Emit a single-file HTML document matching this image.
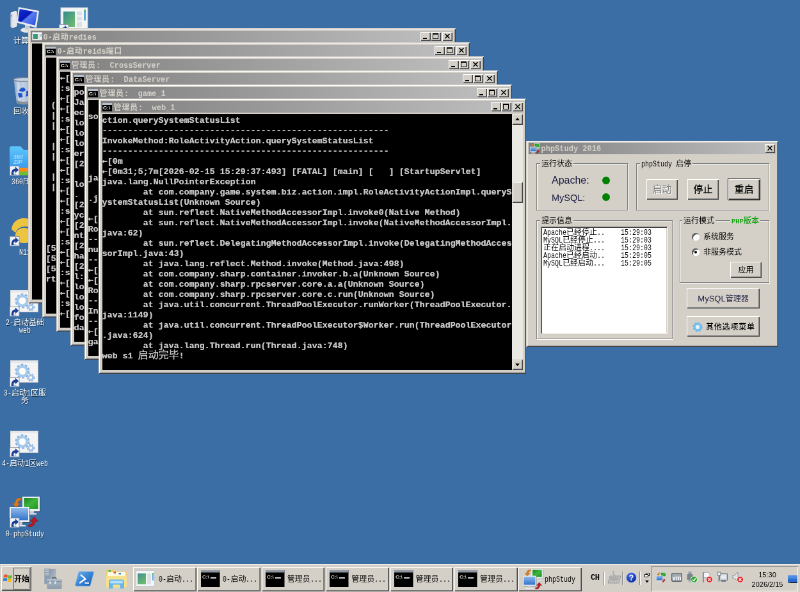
<!DOCTYPE html>
<html lang="zh-CN"><head><meta charset="utf-8"><title>desktop</title>
<style>
html,body{margin:0;padding:0}
body{width:800px;height:592px;overflow:hidden;background:#3a6ea5;position:relative}
#s{will-change:transform;position:absolute;left:0;top:0;width:1250px;height:925px;transform:scale(.64);transform-origin:0 0;overflow:hidden;background:#3a6ea5;font-family:"Liberation Sans","Noto Sans CJK SC",sans-serif;font-size:12px;line-height:1;color:#000}
#s div{position:absolute;box-sizing:border-box}
#s svg{position:absolute;overflow:visible}
#s pre{margin:0;position:absolute}
.l{display:inline-block;font-family:"Liberation Mono",monospace;font-size:12px;transform:scaleX(.8333);transform-origin:0 50%;white-space:pre}
.lb{font-family:"Liberation Mono",monospace;font-size:11.67px;font-weight:bold}
/* desktop icons */
.lab{width:90px;height:13px;text-align:center;color:#fff;font-size:12px;line-height:13px;white-space:nowrap;text-shadow:1px 1px 1px rgba(0,0,0,.6)}
/* console windows */
.cw{width:668px;height:430px;background:#d4d0c8;box-shadow:inset 1px 1px 0 #d4d0c8,inset -1px -1px 0 #404040,inset 2px 2px 0 #fff,inset -2px -2px 0 #808080}
.cap{left:4px;top:4px;width:660px;height:18px;background:linear-gradient(90deg,#808080,#c0c0c0);color:#d4d0c8;white-space:pre}
.tt{position:absolute;left:19.500px;top:5px;font-size:12px;font-weight:bold;font-family:"Liberation Mono","Noto Sans CJK SC",monospace;white-space:pre;line-height:13px}
.tc{letter-spacing:.8px}
.tb{width:16px;height:14px;top:2px;background:#d4d0c8;box-shadow:inset 1px 1px 0 #fff,inset -1px -1px 0 #404040,inset -2px -2px 0 #808080}
.con{left:5.500px;top:24px;width:640px;height:400px;background:#000;overflow:hidden}
.ar{font-family:"DejaVu Sans Mono","Liberation Mono",monospace;line-height:0}
.cj{font-size:16px;font-weight:normal;line-height:0}
.con pre{left:0;top:3px;font-family:"Liberation Mono","DejaVu Sans Mono","Noto Sans CJK SC",monospace;font-weight:bold;font-size:13.33px;line-height:16px;color:#c4c4c4;white-space:pre;text-shadow:.35px 0 0 #c0c0c0}
.sb{left:645.500px;top:24px;width:17px;height:400px;background:#eae8e3}
.sbb{left:0;width:17px;height:17px;background:#d4d0c8;box-shadow:inset 1px 1px 0 #d4d0c8,inset -1px -1px 0 #404040,inset 2px 2px 0 #fff,inset -2px -2px 0 #808080}
/* generic */
.btn{background:#d4d0c8;box-shadow:inset 1px 1px 0 #fff,inset -1px -1px 0 #404040,inset -2px -2px 0 #808080;text-align:center;white-space:nowrap}
.grp{border:1px solid #808080;box-shadow:inset 1px 1px 0 #fff,1px 1px 0 #fff}
.gl{background:#d4d0c8;padding:0 2px;font-size:12px;line-height:12px;white-space:nowrap}
.sunk{box-shadow:inset 1px 1px 0 #808080,inset -1px -1px 0 #fff,inset 2px 2px 0 #404040,inset -2px -2px 0 #d4d0c8}
</style></head>
<body><div id="s">
<svg style="left:15px;top:6px" width="48" height="48" viewBox="0 0 48 48">
<defs><linearGradient id="scr" x1="0" y1="0" x2="1" y2="1"><stop offset="0" stop-color="#1030d8"/><stop offset=".45" stop-color="#0818b8"/><stop offset=".5" stop-color="#5a7cf0"/><stop offset="1" stop-color="#2a50e0"/></linearGradient></defs>
<ellipse cx="27" cy="41" rx="10" ry="4" fill="#e4e7ea"/>
<path d="M24 31 L32 33 L31 41 L24 40Z" fill="#c8ccd2"/>
<path d="M1.500 14 L9 11 L11.500 12 L11.500 35 L4.500 38 L1.500 36Z" fill="#d4d7dc"/><path d="M1.500 14 L9 11 L11.500 12 L4.500 15Z" fill="#f0f2f4"/><path d="M4.500 15 L11.500 12 L11.500 35 L4.500 38Z" fill="#e6e8ec"/>
<rect x="2.300" y="17" width="1.600" height="3" fill="#40c040"/>
<path d="M14 5 L46 11 L42 37.500 L11 29.500Z" fill="#e8ebef"/>
<path d="M15.800 8 L43.200 13.200 L39.800 33.800 L13.200 27Z" fill="url(#scr)"/>
</svg>
<div class="lab" style="left:-6px;top:58px">计算机</div>
<svg style="left:90px;top:6px" width="48" height="48" viewBox="0 0 48 48">
<defs><linearGradient id="gp" x1="0" y1="0" x2="1" y2="1"><stop offset="0" stop-color="#348a8a"/><stop offset="1" stop-color="#72c070"/></linearGradient></defs>
<rect x="5" y="6" width="42" height="34" fill="#f4f5f6" stroke="#c8cdd4"/>
<rect x="9" y="12" width="18" height="24" fill="url(#gp)"/>
<rect x="30" y="12" width="8" height="6" fill="#dcdfe3"/><rect x="30" y="20" width="8" height="6" fill="#dcdfe3"/><rect x="30" y="28" width="8" height="8" fill="#dcdfe3"/>
<rect x="41" y="12" width="3" height="14" fill="#5aa8d8"/><rect x="41" y="9" width="3" height="3" fill="#50b850"/>
</svg>
<svg style="left:92px;top:38px" width="16" height="16" viewBox="0 0 16 16"><rect x=".5" y=".5" width="14.500" height="14.500" fill="#f2f4f8" stroke="#8f98a8"/><path d="M2.800 14 C2.300 8 5 4.300 9 4.500 L9 1.500 L14.200 6.500 L9 11.300 L9 8.400 C6.500 8.300 5.600 10.500 6.800 14Z" fill="#1a3f94"/><path d="M6.800 14 C7.500 12 9.500 11.500 11 14Z" fill="#8fb4e4"/></svg>
<div class="lab" style="left:69px;top:58px"><span class="l" style="width:12px">0-</span>启动<span class="l" style="width:36px">redies</span></div>
<svg style="left:15px;top:116px" width="48" height="48" viewBox="0 0 48 48">
<defs><linearGradient id="rb" x1="0" y1="0" x2="1" y2="0"><stop offset="0" stop-color="#a9bdd6"/><stop offset=".45" stop-color="#dfe8f3"/><stop offset="1" stop-color="#9fb2ca"/></linearGradient></defs>
<g transform="translate(.5,1.800)"><path d="M6 6 L38.500 6 L34 43 Q22 47 10.500 43Z" fill="url(#rb)" opacity=".82"/>
<path d="M10 10 L15 10 L17 40 L13 40Z" fill="#fff" opacity=".35"/>
<ellipse cx="22.200" cy="6.500" rx="16.300" ry="3" fill="#c4d2e4" stroke="#7d8794" stroke-width="1.300"/>
<path d="M14 24 q3 -6 8 -5 l3 4 l-5 3 z M25 25 l6 -2 q3 5 -1 9 l-6 1 q3 -4 1 -8z M13 27 l6 1 l1 6 l-5 1 q-3 -3 -2 -8z" fill="#1f55cc"/>
<path d="M10 39 Q22 43.500 34.400 39 L33.800 43.500 Q22 48 10.500 43.500Z" fill="#8a9098"/></g>
</svg>
<div class="lab" style="left:-6px;top:168px">回收站</div>
<svg style="left:15px;top:226px" width="48" height="48" viewBox="0 0 48 48">
<defs><linearGradient id="zf" x1="0" y1="0" x2="0" y2="1"><stop offset="0" stop-color="#5cc8fa"/><stop offset="1" stop-color="#3a9cf0"/></linearGradient></defs>
<path d="M0 5.500 Q0 2.500 3 2.500 L17 2.500 L22 8 L44 8 Q47 8 47 11 L47 36 L0 36Z" fill="url(#zf)"/>
<rect x="0" y="36" width="47" height="6" fill="#ff8c1a"/><rect x="0" y="42" width="47" height="6" fill="#6cc030"/>
<text x="6" y="22" font-size="9" font-style="italic" font-family="Liberation Sans,sans-serif" fill="#9fd8fc" font-weight="bold">360</text>
<text x="6" y="30.500" font-size="9" font-style="italic" font-family="Liberation Sans,sans-serif" fill="#9fd8fc" font-weight="bold">ZIP</text>
</svg>
<svg style="left:15px;top:259px" width="16" height="16" viewBox="0 0 16 16"><rect x=".5" y=".5" width="14.500" height="14.500" fill="#f2f4f8" stroke="#8f98a8"/><path d="M2.800 14 C2.300 8 5 4.300 9 4.500 L9 1.500 L14.200 6.500 L9 11.300 L9 8.400 C6.500 8.300 5.600 10.500 6.800 14Z" fill="#1a3f94"/><path d="M6.800 14 C7.500 12 9.500 11.500 11 14Z" fill="#8fb4e4"/></svg>
<div class="lab" style="left:-6px;top:278px"><span class="l" style="width:18px">360</span>压缩</div>
<svg style="left:15px;top:336px" width="48" height="48" viewBox="0 0 48 48">
<path d="M3 22.500 C4 11 13 4 24 5 L31 6 L31 18.500 C20 16 12 20 9.500 27.500 Z" fill="#ecc440"/>
<ellipse cx="22.500" cy="32" rx="13.500" ry="12" fill="#ecc440"/>
</svg>
<svg style="left:15px;top:369px" width="16" height="16" viewBox="0 0 16 16"><rect x=".5" y=".5" width="14.500" height="14.500" fill="#f2f4f8" stroke="#8f98a8"/><path d="M2.800 14 C2.300 8 5 4.300 9 4.500 L9 1.500 L14.200 6.500 L9 11.300 L9 8.400 C6.500 8.300 5.600 10.500 6.800 14Z" fill="#1a3f94"/><path d="M6.800 14 C7.500 12 9.500 11.500 11 14Z" fill="#8fb4e4"/></svg>
<div class="lab" style="left:-6px;top:388px"><span class="l" style="width:18px">N11</span></div>
<svg style="left:15px;top:446px" width="48" height="48" viewBox="0 0 48 48">
<rect x="1.500" y="7.500" width="43" height="34" fill="#f4f4f5" stroke="#d9dbde"/><path d="M44.500 8 L44.500 41.500 L2 41.500" fill="none" stroke="#b4b8c0"/>
<rect x="2" y="8" width="42" height="3" fill="#e6e8ea"/>
<circle cx="20" cy="24" r="9" fill="none" stroke="#86b2de" stroke-width="5" stroke-dasharray="3.5 2.2"/>
<circle cx="20" cy="24" r="7.500" fill="none" stroke="#a6c9ea" stroke-width="4"/>
<circle cx="20" cy="24" r="4.500" fill="#fff"/>
<circle cx="33" cy="34" r="4.500" fill="none" stroke="#8fb4dc" stroke-width="3.500" stroke-dasharray="2.2 1.5"/>
<circle cx="33" cy="34" r="3.500" fill="none" stroke="#a4c4e6" stroke-width="2.500"/>
<circle cx="33" cy="34" r="1.800" fill="#f4f4f5"/>
</svg><svg style="left:15px;top:479px" width="16" height="16" viewBox="0 0 16 16"><rect x=".5" y=".5" width="14.500" height="14.500" fill="#f2f4f8" stroke="#8f98a8"/><path d="M2.800 14 C2.300 8 5 4.300 9 4.500 L9 1.500 L14.200 6.500 L9 11.300 L9 8.400 C6.500 8.300 5.600 10.500 6.800 14Z" fill="#1a3f94"/><path d="M6.800 14 C7.500 12 9.500 11.500 11 14Z" fill="#8fb4e4"/></svg>
<div class="lab" style="left:-6px;top:498px"><span class="l" style="width:12px">2-</span>启动基础</div><div class="lab" style="left:-6px;top:510px"><span class="l" style="width:18px">web</span></div>
<svg style="left:15px;top:556px" width="48" height="48" viewBox="0 0 48 48">
<rect x="1.500" y="7.500" width="43" height="34" fill="#f4f4f5" stroke="#d9dbde"/><path d="M44.500 8 L44.500 41.500 L2 41.500" fill="none" stroke="#b4b8c0"/>
<rect x="2" y="8" width="42" height="3" fill="#e6e8ea"/>
<circle cx="20" cy="24" r="9" fill="none" stroke="#86b2de" stroke-width="5" stroke-dasharray="3.5 2.2"/>
<circle cx="20" cy="24" r="7.500" fill="none" stroke="#a6c9ea" stroke-width="4"/>
<circle cx="20" cy="24" r="4.500" fill="#fff"/>
<circle cx="33" cy="34" r="4.500" fill="none" stroke="#8fb4dc" stroke-width="3.500" stroke-dasharray="2.2 1.5"/>
<circle cx="33" cy="34" r="3.500" fill="none" stroke="#a4c4e6" stroke-width="2.500"/>
<circle cx="33" cy="34" r="1.800" fill="#f4f4f5"/>
</svg><svg style="left:15px;top:589px" width="16" height="16" viewBox="0 0 16 16"><rect x=".5" y=".5" width="14.500" height="14.500" fill="#f2f4f8" stroke="#8f98a8"/><path d="M2.800 14 C2.300 8 5 4.300 9 4.500 L9 1.500 L14.200 6.500 L9 11.300 L9 8.400 C6.500 8.300 5.600 10.500 6.800 14Z" fill="#1a3f94"/><path d="M6.800 14 C7.500 12 9.500 11.500 11 14Z" fill="#8fb4e4"/></svg>
<div class="lab" style="left:-6px;top:608px"><span class="l" style="width:12px">3-</span>启动<span class="l" style="width:6px">1</span>区服</div><div class="lab" style="left:-6px;top:620px">务</div>
<svg style="left:15px;top:666px" width="48" height="48" viewBox="0 0 48 48">
<rect x="1.500" y="7.500" width="43" height="34" fill="#f4f4f5" stroke="#d9dbde"/><path d="M44.500 8 L44.500 41.500 L2 41.500" fill="none" stroke="#b4b8c0"/>
<rect x="2" y="8" width="42" height="3" fill="#e6e8ea"/>
<circle cx="20" cy="24" r="9" fill="none" stroke="#86b2de" stroke-width="5" stroke-dasharray="3.5 2.2"/>
<circle cx="20" cy="24" r="7.500" fill="none" stroke="#a6c9ea" stroke-width="4"/>
<circle cx="20" cy="24" r="4.500" fill="#fff"/>
<circle cx="33" cy="34" r="4.500" fill="none" stroke="#8fb4dc" stroke-width="3.500" stroke-dasharray="2.2 1.5"/>
<circle cx="33" cy="34" r="3.500" fill="none" stroke="#a4c4e6" stroke-width="2.500"/>
<circle cx="33" cy="34" r="1.800" fill="#f4f4f5"/>
</svg><svg style="left:15px;top:699px" width="16" height="16" viewBox="0 0 16 16"><rect x=".5" y=".5" width="14.500" height="14.500" fill="#f2f4f8" stroke="#8f98a8"/><path d="M2.800 14 C2.300 8 5 4.300 9 4.500 L9 1.500 L14.200 6.500 L9 11.300 L9 8.400 C6.500 8.300 5.600 10.500 6.800 14Z" fill="#1a3f94"/><path d="M6.800 14 C7.500 12 9.500 11.500 11 14Z" fill="#8fb4e4"/></svg>
<div class="lab" style="left:-6px;top:718px"><span class="l" style="width:12px">4-</span>启动<span class="l" style="width:6px">1</span>区<span class="l" style="width:18px">web</span></div>
<svg style="left:15px;top:776px" width="48" height="48" viewBox="0 0 48 48">
<defs><linearGradient id="gm1" x1="0" y1="0" x2="1" y2="1"><stop offset="0" stop-color="#18801c"/><stop offset=".5" stop-color="#3fb43c"/><stop offset="1" stop-color="#1f9322"/></linearGradient>
<linearGradient id="bm1" x1="0" y1="0" x2="0" y2="1"><stop offset="0" stop-color="#8fb8ea"/><stop offset="1" stop-color="#2f74cc"/></linearGradient></defs>
<rect x="21" y="1" width="27" height="23" fill="#20262c" opacity=".55"/><rect x="20" y="0" width="27" height="23" fill="#eef1f4"/><rect x="22.500" y="2" width="22" height="17" fill="url(#gm1)"/>
<rect x="30" y="23" width="8" height="3" fill="#c4c8ce"/><rect x="26" y="26" width="16" height="2" fill="#dde0e4"/>
<rect x="1" y="17" width="31" height="24" fill="#20262c" opacity=".55"/><rect x="0" y="16" width="31" height="24" fill="#e8eef6"/><rect x="2" y="18" width="27" height="19" fill="url(#bm1)"/>
<rect x="11" y="40" width="9" height="4" fill="#c4c8ce"/><rect x="6" y="44" width="19" height="2.500" fill="#e4e7ea"/>
<path d="M18.300 2.200 C13 1.500 9 3.500 8.500 10.500 L4.500 10.500 L10 16.500 L16.500 10.500 L13 10.500 C13 7.500 14.500 5.500 18.300 5 Z" fill="#dc7a1e" stroke="#a4520e" stroke-width=".6"/>
<path d="M29.500 46.800 C35 47.500 39.500 45.500 40 38.500 L44.500 38.500 L38.500 31.500 L32 38.500 L35.500 38.500 C35.500 41.500 34 43.500 29.500 44 Z" fill="#b41c26" stroke="#7c1018" stroke-width=".6"/>
</svg>
<svg style="left:15px;top:809px" width="16" height="16" viewBox="0 0 16 16"><rect x=".5" y=".5" width="14.500" height="14.500" fill="#f2f4f8" stroke="#8f98a8"/><path d="M2.800 14 C2.300 8 5 4.300 9 4.500 L9 1.500 L14.200 6.500 L9 11.300 L9 8.400 C6.500 8.300 5.600 10.500 6.800 14Z" fill="#1a3f94"/><path d="M6.800 14 C7.500 12 9.500 11.500 11 14Z" fill="#8fb4e4"/></svg>
<div class="lab" style="left:-6px;top:828px"><span class="l" style="width:60px">0-phpStudy</span></div>
<div class="cw" style="left:44px;top:44px"><div class="cap"><svg style="left:2px;top:1px" width="16" height="16" viewBox="0 0 16 16"><rect x=".500" y="1.500" width="15" height="12" fill="#f4f5f6" stroke="#c8cdd4"/><rect x="2" y="4" width="7" height="8" fill="#3b9a70"/><rect x="10" y="4" width="3" height="8" fill="#dcdfe3"/><rect x="13.500" y="4" width="1" height="5" fill="#5aa8d8"/></svg><span class="tt">0-<span class="tc">启动</span>redies</span><div class="tb" style="left:609px"><svg style="left:4px;top:9px" width="6" height="2"><rect width="6" height="2" fill="#000"/></svg></div><div class="tb" style="left:625px"><svg style="left:3px;top:2px" width="9" height="9"><rect x=".5" y="1" width="8" height="7.500" fill="none" stroke="#000"/><rect x="0" y="0" width="9" height="2" fill="#000"/></svg></div><div class="tb" style="left:643px"><svg style="left:4px;top:3px" width="8" height="7"><path d="M0 0 L7 7 M7 0 L0 7" stroke="#000" stroke-width="1.600" fill="none" transform="translate(.5,0)"/></svg></div></div><div class="con"><pre>
























</pre></div><div class="sb"><div class="sbb" style="top:0"><svg style="left:5px;top:6px" width="7" height="4"><path d="M0 4 L3.500 0 L7 4Z" fill="#000"/></svg></div><div class="sbb" style="top:106px;height:33px"></div><div class="sbb" style="top:383px"><svg style="left:5px;top:7px" width="7" height="4"><path d="M0 0 L3.500 4 L7 0Z" fill="#000"/></svg></div></div></div>
<div class="cw" style="left:66px;top:66px"><div class="cap"><svg style="left:2px;top:1.500px" width="16" height="16" viewBox="0 0 16 16"><rect x="0" y="1" width="15" height="13" fill="#000"/><rect x="0" y="1" width="15" height="3" fill="#b8c0cc"/><text x="1" y="11.500" font-size="7" font-family="Liberation Sans,sans-serif" font-weight="bold" fill="#fff" textLength="11" lengthAdjust="spacingAndGlyphs">C:\</text></svg><span class="tt">0-<span class="tc">启动</span>reids<span class="tc">端口</span></span><div class="tb" style="left:609px"><svg style="left:4px;top:9px" width="6" height="2"><rect width="6" height="2" fill="#000"/></svg></div><div class="tb" style="left:625px"><svg style="left:3px;top:2px" width="9" height="9"><rect x=".5" y="1" width="8" height="7.500" fill="none" stroke="#000"/><rect x="0" y="0" width="9" height="2" fill="#000"/></svg></div><div class="tb" style="left:643px"><svg style="left:4px;top:3px" width="8" height="7"><path d="M0 0 L7 7 M7 0 L0 7" stroke="#000" stroke-width="1.600" fill="none" transform="translate(.5,0)"/></svg></div></div><div class="con"><pre>




 (
 |
 |

 |
 |

 |
 |





[5
[5
[5
rt


</pre></div><div class="sb"><div class="sbb" style="top:0"><svg style="left:5px;top:6px" width="7" height="4"><path d="M0 4 L3.500 0 L7 4Z" fill="#000"/></svg></div><div class="sbb" style="top:106px;height:33px"></div><div class="sbb" style="top:383px"><svg style="left:5px;top:7px" width="7" height="4"><path d="M0 0 L3.500 4 L7 0Z" fill="#000"/></svg></div></div></div>
<div class="cw" style="left:88px;top:88px"><div class="cap"><svg style="left:2px;top:1.500px" width="16" height="16" viewBox="0 0 16 16"><rect x="0" y="1" width="15" height="13" fill="#000"/><rect x="0" y="1" width="15" height="3" fill="#b8c0cc"/><text x="1" y="11.500" font-size="7" font-family="Liberation Sans,sans-serif" font-weight="bold" fill="#fff" textLength="11" lengthAdjust="spacingAndGlyphs">C:\</text></svg><span class="tt"><span class="tc">管理员</span>:  CrossServer</span><div class="tb" style="left:609px"><svg style="left:4px;top:9px" width="6" height="2"><rect width="6" height="2" fill="#000"/></svg></div><div class="tb" style="left:625px"><svg style="left:3px;top:2px" width="9" height="9"><rect x=".5" y="1" width="8" height="7.500" fill="none" stroke="#000"/><rect x="0" y="0" width="9" height="2" fill="#000"/></svg></div><div class="tb" style="left:643px"><svg style="left:4px;top:3px" width="8" height="7"><path d="M0 0 L7 7 M7 0 L0 7" stroke="#000" stroke-width="1.600" fill="none" transform="translate(.5,0)"/></svg></div></div><div class="con"><pre>
<span class="ar">←</span>[
:s
<span class="ar">←</span>[
<span class="ar">←</span>[
:s
<span class="ar">←</span>[
<span class="ar">←</span>[
:s
<span class="ar">←</span>[
<span class="ar">←</span>[
:s
<span class="ar">←</span>[
<span class="ar">←</span>[
:s
<span class="ar">←</span>[
<span class="ar">←</span>[
:s
<span class="ar">←</span>[
<span class="ar">←</span>[
:s
<span class="ar">←</span>[
<span class="ar">←</span>[
:s
<span class="ar">←</span>[
</pre></div><div class="sb"><div class="sbb" style="top:0"><svg style="left:5px;top:6px" width="7" height="4"><path d="M0 4 L3.500 0 L7 4Z" fill="#000"/></svg></div><div class="sbb" style="top:106px;height:33px"></div><div class="sbb" style="top:383px"><svg style="left:5px;top:7px" width="7" height="4"><path d="M0 0 L3.500 4 L7 0Z" fill="#000"/></svg></div></div></div>
<div class="cw" style="left:110px;top:110px"><div class="cap"><svg style="left:2px;top:1.500px" width="16" height="16" viewBox="0 0 16 16"><rect x="0" y="1" width="15" height="13" fill="#000"/><rect x="0" y="1" width="15" height="3" fill="#b8c0cc"/><text x="1" y="11.500" font-size="7" font-family="Liberation Sans,sans-serif" font-weight="bold" fill="#fff" textLength="11" lengthAdjust="spacingAndGlyphs">C:\</text></svg><span class="tt"><span class="tc">管理员</span>:  DataServer</span><div class="tb" style="left:609px"><svg style="left:4px;top:9px" width="6" height="2"><rect width="6" height="2" fill="#000"/></svg></div><div class="tb" style="left:625px"><svg style="left:3px;top:2px" width="9" height="9"><rect x=".5" y="1" width="8" height="7.500" fill="none" stroke="#000"/><rect x="0" y="0" width="9" height="2" fill="#000"/></svg></div><div class="tb" style="left:643px"><svg style="left:4px;top:3px" width="8" height="7"><path d="M0 0 L7 7 M7 0 L0 7" stroke="#000" stroke-width="1.600" fill="none" transform="translate(.5,0)"/></svg></div></div><div class="con"><pre>
po
Ja
ec
lo
lo
lo
er
[2

lo
.
[2
yc
[2
nt
[2
ha
[2
l:
lo
lo
lo
fo
da
</pre></div><div class="sb"><div class="sbb" style="top:0"><svg style="left:5px;top:6px" width="7" height="4"><path d="M0 4 L3.500 0 L7 4Z" fill="#000"/></svg></div><div class="sbb" style="top:106px;height:33px"></div><div class="sbb" style="top:383px"><svg style="left:5px;top:7px" width="7" height="4"><path d="M0 0 L3.500 4 L7 0Z" fill="#000"/></svg></div></div></div>
<div class="cw" style="left:132px;top:132px"><div class="cap"><svg style="left:2px;top:1.500px" width="16" height="16" viewBox="0 0 16 16"><rect x="0" y="1" width="15" height="13" fill="#000"/><rect x="0" y="1" width="15" height="3" fill="#b8c0cc"/><text x="1" y="11.500" font-size="7" font-family="Liberation Sans,sans-serif" font-weight="bold" fill="#fff" textLength="11" lengthAdjust="spacingAndGlyphs">C:\</text></svg><span class="tt"><span class="tc">管理员</span>:  game_1</span><div class="tb" style="left:609px"><svg style="left:4px;top:9px" width="6" height="2"><rect width="6" height="2" fill="#000"/></svg></div><div class="tb" style="left:625px"><svg style="left:3px;top:2px" width="9" height="9"><rect x=".5" y="1" width="8" height="7.500" fill="none" stroke="#000"/><rect x="0" y="0" width="9" height="2" fill="#000"/></svg></div><div class="tb" style="left:643px"><svg style="left:4px;top:3px" width="8" height="7"><path d="M0 0 L7 7 M7 0 L0 7" stroke="#000" stroke-width="1.600" fill="none" transform="translate(.5,0)"/></svg></div></div><div class="con"><pre>

so





ja

.j

<span class="ar">←</span>[
Ro
--
nu
--
<span class="ar">←</span>[
<span class="ar">←</span>[
Ro
--
In
--
<span class="ar">←</span>[
ga
</pre></div><div class="sb"><div class="sbb" style="top:0"><svg style="left:5px;top:6px" width="7" height="4"><path d="M0 4 L3.500 0 L7 4Z" fill="#000"/></svg></div><div class="sbb" style="top:106px;height:33px"></div><div class="sbb" style="top:383px"><svg style="left:5px;top:7px" width="7" height="4"><path d="M0 0 L3.500 4 L7 0Z" fill="#000"/></svg></div></div></div>
<div class="cw" style="left:154px;top:154px"><div class="cap"><svg style="left:2px;top:1.500px" width="16" height="16" viewBox="0 0 16 16"><rect x="0" y="1" width="15" height="13" fill="#000"/><rect x="0" y="1" width="15" height="3" fill="#b8c0cc"/><text x="1" y="11.500" font-size="7" font-family="Liberation Sans,sans-serif" font-weight="bold" fill="#fff" textLength="11" lengthAdjust="spacingAndGlyphs">C:\</text></svg><span class="tt"><span class="tc">管理员</span>:  web_1</span><div class="tb" style="left:609px"><svg style="left:4px;top:9px" width="6" height="2"><rect width="6" height="2" fill="#000"/></svg></div><div class="tb" style="left:625px"><svg style="left:3px;top:2px" width="9" height="9"><rect x=".5" y="1" width="8" height="7.500" fill="none" stroke="#000"/><rect x="0" y="0" width="9" height="2" fill="#000"/></svg></div><div class="tb" style="left:643px"><svg style="left:4px;top:3px" width="8" height="7"><path d="M0 0 L7 7 M7 0 L0 7" stroke="#000" stroke-width="1.600" fill="none" transform="translate(.5,0)"/></svg></div></div><div class="con"><pre>
ction.querySystemStatusList
--------------------------------------------------------
InvokeMethod:RoleActivityAction.querySystemStatusList
--------------------------------------------------------
<span class="ar">←</span>[0m
<span class="ar">←</span>[0m31;5;7m[2026-02-15 15:29:37:493] [FATAL] [main] [   ] [StartupServlet]
java.lang.NullPointerException
        at com.company.game.system.biz.action.impl.RoleActivityActionImpl.queryS
ystemStatusList(Unknown Source)
        at sun.reflect.NativeMethodAccessorImpl.invoke0(Native Method)
        at sun.reflect.NativeMethodAccessorImpl.invoke(NativeMethodAccessorImpl.
java:62)
        at sun.reflect.DelegatingMethodAccessorImpl.invoke(DelegatingMethodAcces
sorImpl.java:43)
        at java.lang.reflect.Method.invoke(Method.java:498)
        at com.company.sharp.container.invoker.b.a(Unknown Source)
        at com.company.sharp.rpcserver.core.a.a(Unknown Source)
        at com.company.sharp.rpcserver.core.c.run(Unknown Source)
        at java.util.concurrent.ThreadPoolExecutor.runWorker(ThreadPoolExecutor.
java:1149)
        at java.util.concurrent.ThreadPoolExecutor$Worker.run(ThreadPoolExecutor
.java:624)
        at java.lang.Thread.run(Thread.java:748)
web s1 <span class="cj">启动完毕</span>!
</pre></div><div class="sb"><div class="sbb" style="top:0"><svg style="left:5px;top:6px" width="7" height="4"><path d="M0 4 L3.500 0 L7 4Z" fill="#000"/></svg></div><div class="sbb" style="top:106px;height:33px"></div><div class="sbb" style="top:383px"><svg style="left:5px;top:7px" width="7" height="4"><path d="M0 0 L3.500 4 L7 0Z" fill="#000"/></svg></div></div></div>
<div style="left:822.0px;top:220px;width:394px;height:322px;background:#d4d0c8;box-shadow:inset 1.500px 1px 0 #d4d0c8,inset -1px -1px 0 #404040,inset 2.500px 2px 0 #fff,inset -2px -2px 0 #808080"><div class="cap" style="left:3.500px;top:3px;width:387.500px;height:18px"><svg style="left:2px;top:1px" width="16" height="16" viewBox="0 0 48 48">
<defs><linearGradient id="gm2" x1="0" y1="0" x2="1" y2="1"><stop offset="0" stop-color="#18801c"/><stop offset=".5" stop-color="#3fb43c"/><stop offset="1" stop-color="#1f9322"/></linearGradient>
<linearGradient id="bm2" x1="0" y1="0" x2="0" y2="1"><stop offset="0" stop-color="#8fb8ea"/><stop offset="1" stop-color="#2f74cc"/></linearGradient></defs>
<rect x="21" y="1" width="27" height="23" fill="#20262c" opacity=".55"/><rect x="20" y="0" width="27" height="23" fill="#eef1f4"/><rect x="22.500" y="2" width="22" height="17" fill="url(#gm2)"/>
<rect x="30" y="23" width="8" height="3" fill="#c4c8ce"/><rect x="26" y="26" width="16" height="2" fill="#dde0e4"/>
<rect x="1" y="17" width="31" height="24" fill="#20262c" opacity=".55"/><rect x="0" y="16" width="31" height="24" fill="#e8eef6"/><rect x="2" y="18" width="27" height="19" fill="url(#bm2)"/>
<rect x="11" y="40" width="9" height="4" fill="#c4c8ce"/><rect x="6" y="44" width="19" height="2.500" fill="#e4e7ea"/>
<path d="M18.300 2.200 C13 1.500 9 3.500 8.500 10.500 L4.500 10.500 L10 16.500 L16.500 10.500 L13 10.500 C13 7.500 14.500 5.500 18.300 5 Z" fill="#dc7a1e" stroke="#a4520e" stroke-width=".6"/>
<path d="M29.500 46.800 C35 47.500 39.500 45.500 40 38.500 L44.500 38.500 L38.500 31.500 L32 38.500 L35.500 38.500 C35.500 41.500 34 43.500 29.500 44 Z" fill="#b41c26" stroke="#7c1018" stroke-width=".6"/>
</svg><span class="tt" style="left:20px;top:3.500px">phpStudy 2016</span><div class="tb" style="left:369.500px"><svg style="left:4px;top:3px" width="8" height="7"><path d="M0 0 L7 7 M7 0 L0 7" stroke="#000" stroke-width="1.600" fill="none" transform="translate(.5,0)"/></svg></div></div><div class="grp" style="left:16.0px;top:35.0px;width:143px;height:74px"></div><div class="gl" style="left:22.0px;top:30.0px">运行状态</div><div style="left:40.0px;top:53.0px;font-size:16px;color:#1a1a40;line-height:18px">Apache:</div><div style="left:40.0px;top:80.0px;font-size:14.500px;color:#1a1a40;line-height:18px">MySQL:</div><div style="left:119.0px;top:56.0px;width:12px;height:12px;border-radius:6px;background:#008000"></div><div style="left:119.0px;top:82.0px;width:12px;height:12px;border-radius:6px;background:#008000"></div><div class="grp" style="left:172.0px;top:35.0px;width:208px;height:74px"></div><div class="gl" style="left:178.0px;top:30.0px"><span class="l" style="width:54px">phpStudy </span>启停</div><div class="btn" style="left:188.0px;top:60.0px;width:49px;height:32px;font-size:15px;line-height:31px;color:#808080;text-shadow:1px 1px 0 #fff">启动</div><div class="btn" style="left:252.0px;top:60.0px;width:49px;height:32px;font-size:15px;line-height:31px;font-weight:500">停止</div><div class="btn" style="left:315.0px;top:59.0px;width:51px;height:34px;font-size:15px;line-height:33px;font-weight:500;box-shadow:inset 0 0 0 1px #000,inset 2px 2px 0 #fff,inset -2px -2px 0 #404040,inset -3px -3px 0 #808080">重启</div><div class="grp" style="left:16.0px;top:124.0px;width:213px;height:186px"></div><div class="gl" style="left:22.0px;top:119.0px">提示信息</div><div class="sunk" style="left:23.0px;top:134.0px;width:198px;height:168px;background:#fff"></div><div style="left:27.0px;top:137.0px;font-size:12px;line-height:12px;white-space:nowrap"><span class="l" style="width:36px">Apache</span>已经停止<span class="l" style="width:12px">..</span></div><div style="left:148.0px;top:137.0px;font-size:12px;line-height:12px;white-space:nowrap"><span class="l" style="width:48px">15:29:03</span></div><div style="left:27.0px;top:149.0px;font-size:12px;line-height:12px;white-space:nowrap"><span class="l" style="width:30px">MySQL</span>已经停止<span class="l" style="width:18px">...</span></div><div style="left:148.0px;top:149.0px;font-size:12px;line-height:12px;white-space:nowrap"><span class="l" style="width:48px">15:29:03</span></div><div style="left:27.0px;top:161.0px;font-size:12px;line-height:12px;white-space:nowrap">正在启动进程<span class="l" style="width:24px">....</span></div><div style="left:148.0px;top:161.0px;font-size:12px;line-height:12px;white-space:nowrap"><span class="l" style="width:48px">15:29:03</span></div><div style="left:27.0px;top:173.0px;font-size:12px;line-height:12px;white-space:nowrap"><span class="l" style="width:36px">Apache</span>已经启动<span class="l" style="width:12px">..</span></div><div style="left:148.0px;top:173.0px;font-size:12px;line-height:12px;white-space:nowrap"><span class="l" style="width:48px">15:29:05</span></div><div style="left:27.0px;top:185.0px;font-size:12px;line-height:12px;white-space:nowrap"><span class="l" style="width:30px">MySQL</span>已经启动<span class="l" style="width:18px">...</span></div><div style="left:148.0px;top:185.0px;font-size:12px;line-height:12px;white-space:nowrap"><span class="l" style="width:48px">15:29:05</span></div><div class="grp" style="left:240.0px;top:124.0px;width:140px;height:98px"></div><div class="gl" style="left:244.0px;top:119.0px">运行模式</div><div class="gl" style="left:319.0px;top:119.0px;color:#10a010;font-weight:500"><span class="lb" style="font-size:10.500px;font-weight:bold">PHP</span>版本</div><div style="left:259.0px;top:144.0px;width:12px;height:12px;border-radius:6px;background:#fff;box-shadow:inset 1px 1px 0 #808080,inset -1px -1px 0 #fff,inset 2px 2px 0 #404040"></div><div style="left:259.0px;top:168.0px;width:12px;height:12px;border-radius:6px;background:#fff;box-shadow:inset 1px 1px 0 #808080,inset -1px -1px 0 #fff,inset 2px 2px 0 #404040"><div style="left:4px;top:4px;width:4px;height:4px;border-radius:2px;background:#000"></div></div><div style="left:277.0px;top:144.0px;font-size:12px;line-height:12px;white-space:nowrap">系统服务</div><div style="left:277.0px;top:168.0px;font-size:12px;line-height:12px;white-space:nowrap">非服务模式</div><div class="btn" style="left:319.0px;top:189.0px;width:49px;height:25px;font-size:12px;line-height:26px">应用</div><div class="btn" style="left:251.0px;top:230.0px;width:114px;height:32px;font-size:12px;line-height:33px;color:#1c1c40"><span style="font-size:13px">MySQL</span>管理器</div><div class="btn" style="left:251.0px;top:274.0px;width:114px;height:32px;font-size:12px;line-height:34px;font-weight:500;text-align:left;padding-left:30px;letter-spacing:.8px">其他选项菜单<svg style="left:9px;top:9px" width="16" height="16" viewBox="0 0 16 16"><circle cx="8" cy="8" r="5.500" fill="none" stroke="#5ab4f0" stroke-width="4" stroke-dasharray="2.6 1.7"/><circle cx="8" cy="8" r="5" fill="none" stroke="#6cc0f6" stroke-width="3"/><circle cx="8" cy="8" r="3" fill="#e8f4fc"/></svg></div></div>
<div style="left:0;top:880.600px;width:1250px;height:45px;background:#d4d0c8;box-shadow:inset 0 1px 0 #d4d0c8,inset 0 2px 0 #fff"><div class="btn" style="left:2px;top:4px;width:47px;height:38px"><svg style="left:3px;top:11px" width="15" height="15" viewBox="0 0 15 15"><path d="M1 2.500 Q4 .5 7 2.500 L6.300 7 Q3.500 5 .5 7Z" fill="#e8532a"/><path d="M8 2.800 Q11 4.500 14 2.500 L13.300 7 Q10.500 9 7.300 7.200Z" fill="#6cb52d"/><path d="M.3 8 Q3.300 6 6.200 8 L5.500 12.500 Q2.500 10.500 -.3 12.500Z" fill="#2f7fd8"/><path d="M7.200 8.300 Q10.200 10 13.200 8 L12.500 12.500 Q9.500 14.500 6.500 12.800Z" fill="#f5b915"/></svg><div style="left:19px;top:2px;width:25px;height:34px;border:1px solid #5a5852"></div><div style="left:20px;top:14px;font-size:12px;font-weight:bold;line-height:13px;white-space:nowrap">开始</div></div><svg style="left:66px;top:6px" width="32" height="34" viewBox="0 0 32 34">
<defs><linearGradient id="sv" x1="0" y1="0" x2="1" y2="1"><stop offset="0" stop-color="#8896a4"/><stop offset="1" stop-color="#bcc6d0"/></linearGradient>
<linearGradient id="tbx" x1="0" y1="0" x2="0" y2="1"><stop offset="0" stop-color="#b4c0cc"/><stop offset=".3" stop-color="#a2b0be"/><stop offset="1" stop-color="#8e9cac"/></linearGradient></defs>
<rect x="3.300" y="1.500" width="8.700" height="24.200" fill="#8c9db0"/>
<rect x="4.300" y="2.800" width="6.500" height="1.400" fill="#ccd6e0"/><rect x="4.300" y="5.400" width="6.500" height="1.400" fill="#ccd6e0"/><rect x="4.300" y="8" width="6.500" height="1.400" fill="#ccd6e0"/><rect x="4.300" y="10.600" width="6.500" height="1.400" fill="#bcc8d4"/>
<rect x="12" y="1.900" width="9.500" height="20" fill="url(#sv)"/>
<path d="M15.500 18.500 Q15.500 15.300 18.700 15.300 Q22 15.300 22 18.500" fill="none" stroke="#56626e" stroke-width="1.700"/>
<rect x="7.300" y="17.800" width="23.400" height="15.200" rx="1.500" fill="url(#tbx)"/>
<rect x="7.300" y="21" width="23.400" height=".8" fill="#7c8a98"/>
<rect x="11.300" y="21.300" width="2.200" height="4.200" fill="#e4eaf0"/><rect x="19.300" y="21.300" width="2.200" height="4.200" fill="#e4eaf0"/>
</svg><svg style="left:117px;top:11px" width="30" height="25" viewBox="0 0 30 25">
<defs><linearGradient id="ps" x1="0" y1="0" x2="1" y2="1"><stop offset="0" stop-color="#6fb2ea"/><stop offset=".5" stop-color="#3a84d4"/><stop offset="1" stop-color="#1b58ac"/></linearGradient></defs>
<path d="M8 1 L28 1 Q30 1 29.500 3 L24.500 21.500 Q24 24 22 24 L2 24 Q0 24 .5 22 L5.500 3 Q6 1 8 1Z" fill="url(#ps)" stroke="#86bcec" stroke-width=".8"/>
<path d="M9.500 6.500 L16.500 12.500 L8 18.500" fill="none" stroke="#fff" stroke-width="2.300" stroke-linecap="round" stroke-linejoin="round"/><rect x="15.500" y="18" width="6.500" height="2" fill="#e8f2fc"/>
</svg><svg style="left:165px;top:7px" width="34" height="34" viewBox="0 0 34 34">
<path d="M1 5 Q1 2 4 2 L13 2 L16 5 L31 5 Q33 5 33 7 L33 28 Q33 30 31 30 L3 30 Q1 30 1 28Z" fill="#eccf72"/>
<rect x="3" y="6" width="28" height="7" fill="#fdf8e2"/><rect x="4.500" y="3" width="3.500" height="2.500" fill="#3cb63c"/><rect x="12.500" y="5.500" width="3.500" height="2.500" fill="#e0482c"/><rect x="20.500" y="7" width="3.500" height="2.500" fill="#3c8cdc"/>
<path d="M1 12 L33 12 L33 28 Q33 30 31 30 L3 30 Q1 30 1 28Z" fill="#f6e08c"/>
<path d="M5 31.500 L5 21 Q5 17.500 8.500 17.500 L25.500 17.500 Q29 17.500 29 21 L29 31.500 L22.500 31.500 L22.500 25.500 L11.500 25.500 L11.500 31.500Z" fill="#64b8ec"/><rect x="7" y="19.500" width="20" height="4" rx="1.500" fill="#b4e0fa"/>
</svg><div class="btn" style="left:208.0px;top:5px;width:98.600px;height:38px;text-align:left"><svg style="left:4px;top:5px" width="30" height="27" viewBox="0 0 30 27"><defs><linearGradient id="gp2" x1="0" y1="0" x2=".6" y2="1"><stop offset="0" stop-color="#3f8f92"/><stop offset="1" stop-color="#6dbb6c"/></linearGradient></defs><rect x=".500" y=".500" width="29" height="25" fill="#f4f5f6" stroke="#c4c9d0"/><rect x="3" y="5" width="13" height="17" fill="url(#gp2)"/><rect x="18" y="5" width="6" height="17" fill="#dcdfe3"/><rect x="26" y="7" width="2" height="9" fill="#5aa8d8"/><rect x="26" y="4" width="2" height="3" fill="#50b850"/></svg><div style="left:40px;top:13px;font-size:12px;line-height:13px;white-space:nowrap"><span class="l" style="width:12px">0-</span>启动<span class="l" style="width:18px">...</span></div></div><div class="btn" style="left:308.4px;top:5px;width:98.600px;height:38px;text-align:left"><svg style="left:6px;top:5px" width="30" height="27" viewBox="0 0 30 27"><rect width="29.500" height="26" fill="#000"/><rect width="29.500" height="3.500" fill="#8e96a0"/><text x="2" y="13.500" font-size="8" font-weight="bold" font-family="Liberation Sans,sans-serif" fill="#d0d0d0">C:\</text><rect x="15" y="11" width="9" height="2" fill="#d0d0d0"/></svg><div style="left:40px;top:13px;font-size:12px;line-height:13px;white-space:nowrap"><span class="l" style="width:12px">0-</span>启动<span class="l" style="width:18px">...</span></div></div><div class="btn" style="left:408.8px;top:5px;width:98.600px;height:38px;text-align:left"><svg style="left:6px;top:5px" width="30" height="27" viewBox="0 0 30 27"><rect width="29.500" height="26" fill="#000"/><rect width="29.500" height="3.500" fill="#8e96a0"/><text x="2" y="13.500" font-size="8" font-weight="bold" font-family="Liberation Sans,sans-serif" fill="#d0d0d0">C:\</text><rect x="15" y="11" width="9" height="2" fill="#d0d0d0"/></svg><div style="left:40px;top:13px;font-size:12px;line-height:13px;white-space:nowrap">管理员<span class="l" style="width:18px">...</span></div></div><div class="btn" style="left:509.2px;top:5px;width:98.600px;height:38px;text-align:left"><svg style="left:6px;top:5px" width="30" height="27" viewBox="0 0 30 27"><rect width="29.500" height="26" fill="#000"/><rect width="29.500" height="3.500" fill="#8e96a0"/><text x="2" y="13.500" font-size="8" font-weight="bold" font-family="Liberation Sans,sans-serif" fill="#d0d0d0">C:\</text><rect x="15" y="11" width="9" height="2" fill="#d0d0d0"/></svg><div style="left:40px;top:13px;font-size:12px;line-height:13px;white-space:nowrap">管理员<span class="l" style="width:18px">...</span></div></div><div class="btn" style="left:609.6px;top:5px;width:98.600px;height:38px;text-align:left"><svg style="left:6px;top:5px" width="30" height="27" viewBox="0 0 30 27"><rect width="29.500" height="26" fill="#000"/><rect width="29.500" height="3.500" fill="#8e96a0"/><text x="2" y="13.500" font-size="8" font-weight="bold" font-family="Liberation Sans,sans-serif" fill="#d0d0d0">C:\</text><rect x="15" y="11" width="9" height="2" fill="#d0d0d0"/></svg><div style="left:40px;top:13px;font-size:12px;line-height:13px;white-space:nowrap">管理员<span class="l" style="width:18px">...</span></div></div><div class="btn" style="left:710.0px;top:5px;width:98.600px;height:38px;text-align:left"><svg style="left:6px;top:5px" width="30" height="27" viewBox="0 0 30 27"><rect width="29.500" height="26" fill="#000"/><rect width="29.500" height="3.500" fill="#8e96a0"/><text x="2" y="13.500" font-size="8" font-weight="bold" font-family="Liberation Sans,sans-serif" fill="#d0d0d0">C:\</text><rect x="15" y="11" width="9" height="2" fill="#d0d0d0"/></svg><div style="left:40px;top:13px;font-size:12px;line-height:13px;white-space:nowrap">管理员<span class="l" style="width:18px">...</span></div></div><div class="btn" style="left:810.4px;top:5px;width:98.600px;height:38px;text-align:left"><svg style="left:7px;top:3px" width="32" height="32" viewBox="0 0 48 48">
<defs><linearGradient id="gm3" x1="0" y1="0" x2="1" y2="1"><stop offset="0" stop-color="#18801c"/><stop offset=".5" stop-color="#3fb43c"/><stop offset="1" stop-color="#1f9322"/></linearGradient>
<linearGradient id="bm3" x1="0" y1="0" x2="0" y2="1"><stop offset="0" stop-color="#8fb8ea"/><stop offset="1" stop-color="#2f74cc"/></linearGradient></defs>
<rect x="21" y="1" width="27" height="23" fill="#20262c" opacity=".55"/><rect x="20" y="0" width="27" height="23" fill="#eef1f4"/><rect x="22.500" y="2" width="22" height="17" fill="url(#gm3)"/>
<rect x="30" y="23" width="8" height="3" fill="#c4c8ce"/><rect x="26" y="26" width="16" height="2" fill="#dde0e4"/>
<rect x="1" y="17" width="31" height="24" fill="#20262c" opacity=".55"/><rect x="0" y="16" width="31" height="24" fill="#e8eef6"/><rect x="2" y="18" width="27" height="19" fill="url(#bm3)"/>
<rect x="11" y="40" width="9" height="4" fill="#c4c8ce"/><rect x="6" y="44" width="19" height="2.500" fill="#e4e7ea"/>
<path d="M18.300 2.200 C13 1.500 9 3.500 8.500 10.500 L4.500 10.500 L10 16.500 L16.500 10.500 L13 10.500 C13 7.500 14.500 5.500 18.300 5 Z" fill="#dc7a1e" stroke="#a4520e" stroke-width=".6"/>
<path d="M29.500 46.800 C35 47.500 39.500 45.500 40 38.500 L44.500 38.500 L38.500 31.500 L32 38.500 L35.500 38.500 C35.500 41.500 34 43.500 29.500 44 Z" fill="#b41c26" stroke="#7c1018" stroke-width=".6"/>
</svg><div style="left:41px;top:13px;line-height:13px;white-space:nowrap"><span class="l" style="width:48px">phpStudy</span></div></div><div style="left:923px;top:15px;line-height:13px"><span class="lb" style="font-size:12px;letter-spacing:-.4px">CH</span></div><div style="left:943px;top:12px;width:2px;height:21px;border-left:1px solid #808080;border-right:1px solid #fff"></div><svg style="left:950px;top:11px" width="20" height="22" viewBox="0 0 20 22"><path d="M9 0 Q6 4 11 7" fill="none" stroke="#a8a8a8" stroke-width="1.500"/><path d="M3 8 L20 8 L17 19 L0 19Z" fill="#c0c0c0" stroke="#989898"/><path d="M4 11 L17 11 M3.500 14 L16 14" stroke="#909090" stroke-width="1.500" stroke-dasharray="2 1.200"/></svg><div style="left:972px;top:12px;width:2px;height:21px;border-left:1px solid #808080;border-right:1px solid #fff"></div><svg style="left:978px;top:13px" width="17" height="17" viewBox="0 0 17 17"><defs><radialGradient id="hq" cx=".4" cy=".3" r=".7"><stop offset="0" stop-color="#4878e8"/><stop offset="1" stop-color="#0c24a0"/></radialGradient></defs><circle cx="8.500" cy="8.500" r="8" fill="url(#hq)" stroke="#b8c4e8"/><text x="8.500" y="13" font-size="12" font-weight="bold" font-family="Liberation Sans,sans-serif" fill="#fff" text-anchor="middle">?</text></svg><div style="left:999px;top:12px;width:2px;height:21px;border-left:1px solid #808080;border-right:1px solid #fff"></div><svg style="left:1006px;top:13px" width="10" height="20" viewBox="0 0 10 20"><rect x="3.500" y="1.500" width="5" height="4" fill="#fff" stroke="#000"/><rect x="1.500" y="3.500" width="5" height="4" fill="#fff" stroke="#000"/><path d="M2 13 L8 13 L5 16.500Z" fill="#000"/></svg><div style="left:1017px;top:4px;width:1230px;height:39px;box-shadow:inset 1px 1px 0 #808080,inset -1px -1px 0 #fff;width:230px"></div><svg style="left:1025px;top:13px" width="16" height="16" viewBox="0 0 48 48">
<defs><linearGradient id="gm4" x1="0" y1="0" x2="1" y2="1"><stop offset="0" stop-color="#18801c"/><stop offset=".5" stop-color="#3fb43c"/><stop offset="1" stop-color="#1f9322"/></linearGradient>
<linearGradient id="bm4" x1="0" y1="0" x2="0" y2="1"><stop offset="0" stop-color="#8fb8ea"/><stop offset="1" stop-color="#2f74cc"/></linearGradient></defs>
<rect x="21" y="1" width="27" height="23" fill="#20262c" opacity=".55"/><rect x="20" y="0" width="27" height="23" fill="#eef1f4"/><rect x="22.500" y="2" width="22" height="17" fill="url(#gm4)"/>
<rect x="30" y="23" width="8" height="3" fill="#c4c8ce"/><rect x="26" y="26" width="16" height="2" fill="#dde0e4"/>
<rect x="1" y="17" width="31" height="24" fill="#20262c" opacity=".55"/><rect x="0" y="16" width="31" height="24" fill="#e8eef6"/><rect x="2" y="18" width="27" height="19" fill="url(#bm4)"/>
<rect x="11" y="40" width="9" height="4" fill="#c4c8ce"/><rect x="6" y="44" width="19" height="2.500" fill="#e4e7ea"/>
<path d="M18.300 2.200 C13 1.500 9 3.500 8.500 10.500 L4.500 10.500 L10 16.500 L16.500 10.500 L13 10.500 C13 7.500 14.500 5.500 18.300 5 Z" fill="#dc7a1e" stroke="#a4520e" stroke-width=".6"/>
<path d="M29.500 46.800 C35 47.500 39.500 45.500 40 38.500 L44.500 38.500 L38.500 31.500 L32 38.500 L35.500 38.500 C35.500 41.500 34 43.500 29.500 44 Z" fill="#b41c26" stroke="#7c1018" stroke-width=".6"/>
</svg><svg style="left:1049px;top:13px" width="17" height="16" viewBox="0 0 17 16"><rect x=".5" y="1.500" width="16" height="13" rx="1.500" fill="#8a929a" stroke="#5a626a"/><rect x="2" y="3" width="13" height="10" fill="#a2aab2"/><text x="8.500" y="11.800" font-size="9.500" font-weight="bold" font-family="Liberation Sans,sans-serif" fill="#fff" text-anchor="middle">vm</text></svg><svg style="left:1072px;top:12px" width="18" height="18" viewBox="0 0 18 18"><rect x="3.500" y="0" width="5" height="4" fill="#9aa2aa"/><rect x="1.500" y="3.500" width="9" height="10" rx="2.500" fill="#7c848c"/><rect x="4.500" y="13" width="3" height="4" fill="#9aa2aa"/><circle cx="12.500" cy="12.500" r="5" fill="#2aa52a" stroke="#eaf6ea"/><path d="M10 12.500 L12 14.500 L15 10.500" fill="none" stroke="#fff" stroke-width="1.600"/></svg><svg style="left:1096px;top:12px" width="18" height="18" viewBox="0 0 18 18"><rect x="2" y="1" width="1.500" height="16" fill="#606870"/><path d="M3.500 2 Q8 0 13 2.500 L13 10 Q8 8 3.500 10Z" fill="#f4f6f8" stroke="#9098a0" stroke-width=".8"/><circle cx="12.500" cy="12.500" r="5" fill="#e02828" stroke="#fbeaea"/><path d="M10.500 10.500 L14.500 14.500 M14.500 10.500 L10.500 14.500" stroke="#fff" stroke-width="1.600"/></svg><svg style="left:1120px;top:12px" width="18" height="18" viewBox="0 0 18 18"><rect x="4.500" y="3.500" width="12" height="10" fill="#c4cad2" stroke="#6c747c"/><rect x="6.500" y="5.500" width="8" height="6" fill="#e8ecf0"/><rect x="7" y="14" width="7" height="2" fill="#7c848c"/><rect x="1" y="1" width="5" height="5" fill="#eef1f4" stroke="#6c747c"/><rect x="2.500" y="6" width="1.500" height="10" fill="#8a929a"/></svg><svg style="left:1144px;top:12px" width="18" height="18" viewBox="0 0 18 18"><path d="M1 6 L4 6 L9 1 L9 16 L4 11 L1 11Z" fill="#dfe3e8" stroke="#8a929a"/><circle cx="12.500" cy="12.500" r="5" fill="#e02828" stroke="#fbeaea"/><path d="M10.500 10.500 L14.500 14.500 M14.500 10.500 L10.500 14.500" stroke="#fff" stroke-width="1.600"/></svg><div style="left:1169px;top:11px;width:60px;text-align:center;font-size:11px;line-height:12px">15:30</div><div style="left:1169px;top:26px;width:60px;text-align:center;font-size:11px;line-height:12px">2026/2/15</div><svg style="left:1231px;top:18px" width="15" height="13" viewBox="0 0 15 13"><rect width="15" height="12" fill="#2c6cd0"/><rect x="0" y="0" width="15" height="5" fill="#4f8ce4"/><rect x="0" y="10" width="15" height="2" fill="#1c2c50"/><rect x="1" y="10.300" width="2" height="1.400" fill="#50c050"/></svg></div>
</div></body></html>
